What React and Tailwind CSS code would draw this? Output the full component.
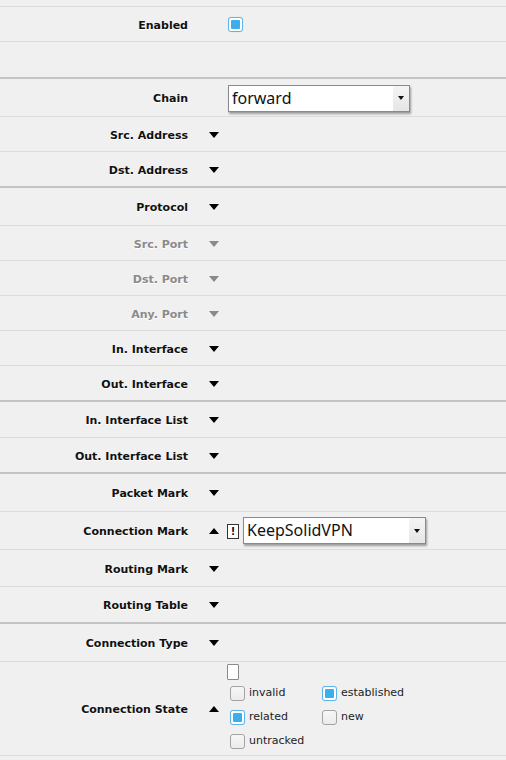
import React from "react";

const Tri = ({ up = false, dim = false }) => (
  <svg width="10" height="6" viewBox="0 0 10 6" className="block">
    <path d={up ? "M0 6 L5 0 L10 6 Z" : "M0 0 L10 0 L5 6 Z"} fill={dim ? "#8a8a8a" : "#000"} />
  </svg>
);

const Check = ({ on = false }) =>
  on ? (
    <div className="w-[15px] h-[15px] rounded-[3px] border border-[#5cb6ec] bg-white p-[2px] shadow-[0_0_1px_#9fd4f5]">
      <div className="w-full h-full bg-[#3daee9] rounded-[1px]" />
    </div>
  ) : (
    <div className="w-[15px] h-[15px] rounded-[3px] border border-[#a3a3a3] bg-gradient-to-b from-[#f7f7f7] to-[#ebebeb]" />
  );

const Select = ({ value, width }) => (
  <div
    className={`flex h-[27px] bg-white border border-[#8a8a8a] shadow-[1px_2px_2px_rgba(0,0,0,0.35)] ${width}`}
  >
    <div className="flex-1 pl-[3px] leading-[25px] text-[16px] text-[#111] font-['Noto_Sans',sans-serif]">
      {value}
    </div>
    <div className="w-[16px] flex items-center justify-center bg-gradient-to-b from-[#f4f4f4] to-[#e6e6e6]">
      <svg width="6" height="4" viewBox="0 0 6 4">
        <path d="M0 0 L6 0 L3 4 Z" fill="#111" />
      </svg>
    </div>
  </div>
);

const Row = ({ label, h, arrow, dim, border = true, children }) => (
  <div className={`flex items-center ${h} ${border ? "border-b border-[#dcdcdc]" : ""}`}>
    <div
      className={`w-[188px] pt-[4px] text-right font-bold text-[11px] [text-shadow:0_1px_0_#fff] ${dim ? "text-[#8a8a8a]" : "text-[#111]"}`}
    >
      {label}
    </div>
    <div className="w-[39px] pl-[21px] pt-[1px]">{arrow && <Tri up={arrow === "up"} dim={dim} />}</div>
    <div className="flex-1">{children}</div>
  </div>
);

const Sep = () => <div className="h-[2px] bg-[#c4c4c4]" />;

const StateBox = ({ label, on }) => (
  <div className="flex items-center h-[24px] pl-[3px]">
    <Check on={on} />
    <span className="ml-[4px] text-[11px] text-[#222]">{label}</span>
  </div>
);

export default function App() {
  return (
    <div className="w-[506px] h-[760px] overflow-hidden bg-[#f0f0f0] font-['DejaVu_Sans',Verdana,sans-serif]">
      <div className="h-[7px] border-b border-[#dcdcdc]" />
      <Row label="Enabled" h="h-[35px]">
        <div className="pl-[1px] pt-[1px]">
          <Check on />
        </div>
      </Row>
      <div className="h-[35px]" />
      <Sep />
      <Row label="Chain" h="h-[38px]">
        <div className="pl-[1px] pt-[1px]">
          <Select value="forward" width="w-[182px]" />
        </div>
      </Row>
      <Row label="Src. Address" h="h-[35px]" arrow="down" />
      <Row label="Dst. Address" h="h-[34px]" arrow="down" border={false} />
      <Sep />
      <Row label="Protocol" h="h-[38px]" arrow="down" />
      <Row label="Src. Port" h="h-[35px]" arrow="down" dim />
      <Row label="Dst. Port" h="h-[35px]" arrow="down" dim />
      <Row label="Any. Port" h="h-[35px]" arrow="down" dim />
      <Row label="In. Interface" h="h-[35px]" arrow="down" />
      <Row label="Out. Interface" h="h-[34px]" arrow="down" border={false} />
      <Sep />
      <Row label="In. Interface List" h="h-[36px]" arrow="down" />
      <Row label="Out. Interface List" h="h-[34px]" arrow="down" border={false} />
      <Sep />
      <Row label="Packet Mark" h="h-[38px]" arrow="down" />
      <Row label="Connection Mark" h="h-[38px]" arrow="up">
        <div className="flex items-center">
          <div className="w-[12px] h-[15px] mt-[2px] border border-[#333] bg-white flex items-center justify-center text-[10px] font-bold text-[#111] leading-none">
            !
          </div>
          <div className="ml-[4px]">
            <Select value="KeepSolidVPN" width="w-[183px]" />
          </div>
        </div>
      </Row>
      <Row label="Routing Mark" h="h-[37px]" arrow="down" />
      <Row label="Routing Table" h="h-[35px]" arrow="down" border={false} />
      <Sep />
      <Row label="Connection Type" h="h-[38px]" arrow="down" />
      <Row label="Connection State" h="h-[94px]" arrow="up">
        <div className="flex flex-col">
          <div className="w-[12px] h-[16px] border border-[#8a8a8a] bg-white rounded-[1px]" />
          <div className="grid grid-cols-[92px_92px] mt-[1px]">
            <StateBox label="invalid" />
            <StateBox label="established" on />
            <StateBox label="related" on />
            <StateBox label="new" />
            <StateBox label="untracked" />
          </div>
        </div>
      </Row>
    </div>
  );
}
